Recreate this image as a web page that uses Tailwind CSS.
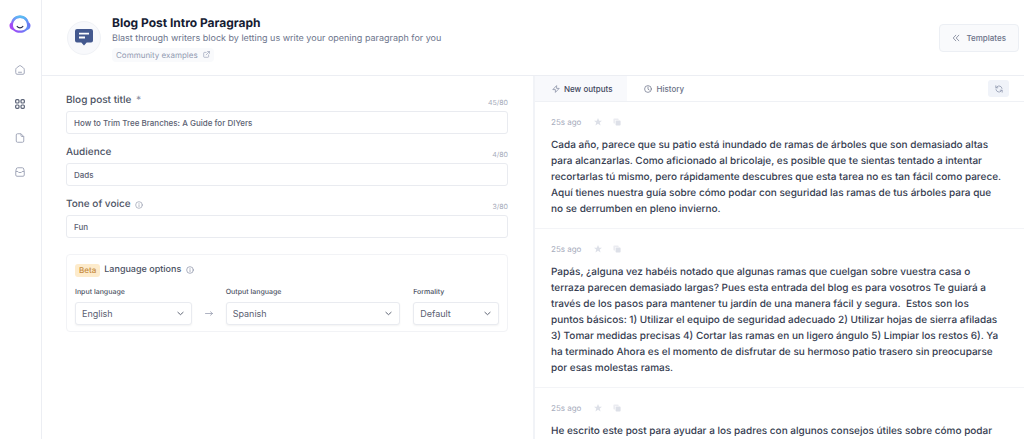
<!DOCTYPE html>
<html lang="en">
<head>
<meta charset="utf-8">
<title>Blog Post Intro Paragraph</title>
<script src="https://cdn.jsdelivr.net/npm/@tailwindcss/browser@4"></script>
</head>
<body class="bg-white font-['Inter',sans-serif] text-[#4b5263] [text-rendering:geometricPrecision]">
<svg class="hidden" aria-hidden="true">
  <symbol id="info" viewBox="0 0 24 24" fill="none" stroke="currentColor" stroke-width="2" stroke-linecap="round"><circle cx="12" cy="12" r="10"/><path d="M12 11v6M12 7.500v.1"/></symbol>
  <symbol id="chevron" viewBox="0 0 24 24" fill="none" stroke="currentColor" stroke-width="3" stroke-linecap="round" stroke-linejoin="round"><path d="M3 8l9 8 9-8"/></symbol>
  <symbol id="star" viewBox="0 0 20 20" fill="currentColor"><path d="M10 0l2.900 6.600h7.100l-5.600 4.600 2 7.300L10 14.500l-6.400 4 2-7.300L0 6.600h7.100z"/></symbol>
  <symbol id="copy" viewBox="0 0 20 20" fill="currentColor"><path opacity=".6" d="M3 1h9a2 2 0 0 1 2 2v2H8a3 3 0 0 0-3 3v6H3a2 2 0 0 1-2-2V3a2 2 0 0 1 2-2z"/><rect x="6.500" y="6.500" width="12.500" height="12.500" rx="2"/></symbol>
</svg>
<div class="flex h-screen overflow-hidden">
  <nav class="flex w-[42px] shrink-0 flex-col items-center border-r border-[#eceef3] pt-[14px] pr-px text-[#a3a8ba]">
    <a href="#" aria-label="Dashboard" class="mb-[31px]">
      <svg class="h-[20px] w-[22px]" viewBox="0 0 22 20" fill="none">
        <defs>
          <linearGradient id="g" x1="0" y1="15" x2="22" y2="7" gradientUnits="userSpaceOnUse"><stop stop-color="#b43df5"/><stop offset=".35" stop-color="#8a5cf8"/><stop offset=".75" stop-color="#5f8ff5"/><stop offset="1" stop-color="#7a5cf5"/></linearGradient>
          <linearGradient id="t" x1="0" y1="1" x2="0" y2="10" gradientUnits="userSpaceOnUse"><stop stop-color="#58c8f2"/><stop offset="1" stop-color="#58c8f2" stop-opacity="0"/></linearGradient>
        </defs>
        <path fill="url(#g)" fill-rule="evenodd" d="M11 1.500c4.800 0 7.900 3.100 8.800 7 1 .5 1.700 1.600 1.700 3.200 0 2.300-1.500 3.900-3.600 4.500-1.800 1.700-4.200 2.600-6.900 2.600s-5.100-.9-6.900-2.600C2 15.600.5 14 .5 11.700c0-1.600.7-2.700 1.700-3.200.9-3.900 4-7 8.800-7zM11 4C6.700 4 4 7.300 4 11.200c0 3.600 3 5.400 7 5.400s7-1.800 7-5.400C18 7.300 15.300 4 11 4z"/>
        <path fill="url(#t)" fill-rule="evenodd" d="M11 1.500c4.800 0 7.900 3.100 8.800 7 1 .5 1.700 1.600 1.700 3.200 0 2.300-1.500 3.900-3.600 4.500-1.800 1.700-4.200 2.600-6.900 2.600s-5.100-.9-6.900-2.600C2 15.600.5 14 .5 11.700c0-1.600.7-2.700 1.700-3.200.9-3.900 4-7 8.800-7zM11 4C6.700 4 4 7.300 4 11.200c0 3.600 3 5.400 7 5.400s7-1.800 7-5.400C18 7.300 15.300 4 11 4z"/>
        <path d="M8.200 12.500c.7 1 1.600 1.400 2.800 1.400s2.100-.4 2.800-1.400" stroke="#282b4a" stroke-width="1.300" stroke-linecap="round"/>
      </svg>
    </a>
    <div class="flex flex-col gap-[24px]">
      <a href="#" aria-label="Home"><svg class="size-[10px]" viewBox="0 0 20 20" fill="none" stroke="currentColor" stroke-width="2" stroke-linecap="round" stroke-linejoin="round"><path d="M1.500 8.500c0-1 .4-1.700 1.200-2.300L8.500 1.700c.9-.7 2.100-.7 3 0l5.800 4.500c.8.600 1.200 1.300 1.200 2.300V16a2.500 2.500 0 0 1-2.500 2.500H4A2.500 2.500 0 0 1 1.500 16zM7 14.500h6"/></svg></a>
      <a href="#" aria-label="Templates" class="text-[#5c6478]"><svg class="size-[10px]" viewBox="0 0 20 20" fill="none" stroke="currentColor" stroke-width="2.400"><rect x="1.300" y="1.300" width="6.700" height="6.700" rx="2"/><rect x="12" y="1.300" width="6.700" height="6.700" rx="2"/><rect x="1.300" y="12" width="6.700" height="6.700" rx="2"/><rect x="12" y="12" width="6.700" height="6.700" rx="2"/></svg></a>
      <a href="#" aria-label="Documents"><svg class="size-[10px]" viewBox="0 0 20 20" fill="none" stroke="currentColor" stroke-width="2" stroke-linejoin="round"><path d="M5 1.500h7L17.500 7v9a2.500 2.500 0 0 1-2.500 2.500H5A2.500 2.500 0 0 1 2.500 16V4A2.500 2.500 0 0 1 5 1.500zM12 1.500V5a2 2 0 0 0 2 2h3.500"/></svg></a>
      <a href="#" aria-label="Inbox"><svg class="size-[10px]" viewBox="0 0 20 20" fill="none" stroke="currentColor" stroke-width="2" stroke-linejoin="round"><path d="M1.500 9L2.500 4a3 3 0 0 1 3-2.500h9a3 3 0 0 1 3 2.500l1 5v7a2.500 2.500 0 0 1-2.500 2.500H4A2.500 2.500 0 0 1 1.500 16zM1.500 9h4.300l1.700 2h5l1.700-2h4.300"/></svg></a>
    </div>
  </nav>

  <div class="flex min-w-0 flex-1 flex-col">
    <header class="flex h-[76px] shrink-0 items-center border-b border-[#eceef3] pr-[5px] pl-[25px]">
      <div class="flex size-[34px] items-center justify-center rounded-full border border-[#f0f2f6] bg-[#f8f9fc]">
        <svg class="h-[17px] w-[18px]" viewBox="0 0 18 17"><path fill="#44598f" d="M2 0h14a2 2 0 0 1 2 2v9.500a2 2 0 0 1-2 2h-4.300L9 16.500l-2.700-3H2a2 2 0 0 1-2-2V2a2 2 0 0 1 2-2z"/><path d="M4 4.700h10M4 8.500h6" stroke="#fff" stroke-width="1.800"/></svg>
      </div>
      <div class="ml-[11px] flex-1">
        <h1 class="text-[12px] leading-[18px] font-bold text-[#161c33]">Blog Post Intro Paragraph</h1>
        <p class="text-[9px] leading-[14px] text-[#6d758c]">Blast through writers block by letting us write your opening paragraph for you</p>
        <a href="#" class="mt-[2px] flex h-[14px] w-fit items-center gap-[5px] rounded bg-[#f9fafc] px-[4px] text-[8px] text-[#929bb2]">Community examples
          <svg class="size-[7px]" viewBox="0 0 20 20" fill="none" stroke="currentColor" stroke-width="1.800" stroke-linecap="round" stroke-linejoin="round"><path d="M9 4H4a2 2 0 0 0-2 2v10a2 2 0 0 0 2 2h10a2 2 0 0 0 2-2v-5M13 1.500h5.500V7M18 2L9 11"/></svg>
        </a>
      </div>
      <button class="flex h-[28px] items-center gap-[6px] rounded border border-[#eceff4] bg-[#f9fafc] px-[12px] text-[8px] font-medium text-[#6b7288]">
        <svg class="size-[8px]" viewBox="0 0 20 20" fill="none" stroke="currentColor" stroke-width="1.800" stroke-linecap="round" stroke-linejoin="round"><path d="M9.500 3L3 10l6.500 7M17 3l-6.500 7 6.500 7"/></svg>
        Templates
      </button>
    </header>

    <div class="grid min-h-0 flex-1 grid-cols-2">
      <form class="flex min-w-0 flex-col gap-[12px] pt-[18px] pr-[25px] pl-[24px]">
        <div>
          <div class="flex h-[17px] justify-between"><label for="title" class="text-[10px] leading-[13px] font-medium">Blog post title <span class="ml-[2px] text-[#8b91a3]">*</span></label><span class="pt-[3px] text-[7px] leading-[12px] text-[#a6abba]">45/80</span></div>
          <input id="title" value="How to Trim Tree Branches: A Guide for DIYers" class="block h-[23px] w-full rounded-[3px] border border-[#e9ebf0] px-[7px] text-[8px] font-medium text-[#5b6172]">
        </div>
        <div>
          <div class="flex h-[17px] justify-between"><label for="audience" class="text-[10px] leading-[13px] font-medium">Audience</label><span class="pt-[3px] text-[7px] leading-[12px] text-[#a6abba]">4/80</span></div>
          <input id="audience" value="Dads" class="block h-[23px] w-full rounded-[3px] border border-[#e9ebf0] px-[7px] text-[8px] font-medium text-[#5b6172]">
        </div>
        <div>
          <div class="flex h-[17px] justify-between"><label for="tone" class="flex h-[13px] items-center gap-[4px] text-[10px] leading-[13px] font-medium">Tone of voice <svg class="size-[8px] text-[#9299ab]"><use href="#info"/></svg></label><span class="pt-[3px] text-[7px] leading-[12px] text-[#a6abba]">3/80</span></div>
          <input id="tone" value="Fun" class="block h-[23px] w-full rounded-[3px] border border-[#e9ebf0] px-[7px] text-[8px] font-medium text-[#5b6172]">
        </div>
        <fieldset class="mt-[4px] rounded border border-[#f2f3f6] px-[8px] pt-[8px] pb-[6px]">
          <div class="flex h-[14px] items-center text-[9px] font-medium">
            <span class="flex h-[13px] items-center rounded-[3px] bg-[#fdebcb] px-[4px] text-[8px] text-[#c58a3c]">Beta</span>
            <span class="ml-[4px]">Language options</span>
            <svg class="ml-[5px] size-[8px] text-[#8289a0]"><use href="#info"/></svg>
          </div>
          <div class="mt-[9px] flex items-end text-[8px]">
            <div class="min-w-0 flex-[117]">
              <label for="in" class="block h-[16px] text-[7px] leading-[12px] font-medium">Input language</label>
              <div class="grid items-center"><select id="in" class="col-start-1 row-start-1 h-[23px] w-full appearance-none rounded-[3px] border border-[#e9ebf0] bg-white px-[6px] text-[9px] text-[#5b6172] shadow-xs"><option>English</option></select><svg class="pointer-events-none col-start-1 row-start-1 mr-[8px] size-[7px] justify-self-end"><use href="#chevron"/></svg></div>
            </div>
            <svg class="mx-[13px] mb-[8px] h-[7px] w-[8px] shrink-0 text-[#9aa0b3]" viewBox="0 0 16 14" fill="none" stroke="currentColor" stroke-width="1.600" stroke-linecap="round" stroke-linejoin="round"><path d="M1 7h14M11 3.500L15 7l-4 3.500"/></svg>
            <div class="min-w-0 flex-[175]">
              <label for="out" class="block h-[16px] text-[7px] leading-[12px] font-medium">Output language</label>
              <div class="grid items-center"><select id="out" class="col-start-1 row-start-1 h-[23px] w-full appearance-none rounded-[3px] border border-[#e9ebf0] bg-white px-[6px] text-[9px] text-[#5b6172] shadow-xs"><option>Spanish</option></select><svg class="pointer-events-none col-start-1 row-start-1 mr-[8px] size-[7px] justify-self-end"><use href="#chevron"/></svg></div>
            </div>
            <div class="ml-[13px] min-w-0 flex-[86]">
              <label for="formality" class="block h-[16px] text-[7px] leading-[12px] font-medium">Formality</label>
              <div class="grid items-center"><select id="formality" class="col-start-1 row-start-1 h-[23px] w-full appearance-none rounded-[3px] border border-[#e9ebf0] bg-white px-[6px] text-[9px] text-[#5b6172] shadow-xs"><option>Default</option></select><svg class="pointer-events-none col-start-1 row-start-1 mr-[8px] size-[7px] justify-self-end"><use href="#chevron"/></svg></div>
            </div>
          </div>
        </fieldset>
      </form>

      <main class="min-w-0 overflow-hidden border-l-2 border-[#f1f3f7]">
        <div class="flex h-[26px] items-center border-b border-[#eff1f5] pr-[15px] text-[8px] font-medium">
          <button class="flex h-full items-center gap-[4px] bg-[#f8f9fc] pr-[15px] pl-[17px] text-[#3f475c]">
            <svg class="size-[8px] text-[#8a92a6]" viewBox="0 0 20 20" fill="none" stroke="currentColor" stroke-width="2" stroke-linejoin="round"><path d="M11.500 1.500L2 11.500h6.500v7l9.500-10h-6.500z"/></svg>New outputs</button>
          <button class="flex h-full items-center gap-[4px] px-[17px] text-[#6b7288]">
            <svg class="size-[8px]" viewBox="0 0 20 20" fill="none" stroke="currentColor" stroke-width="1.800" stroke-linecap="round"><circle cx="10" cy="10" r="8.500"/><path d="M10 5v5.500l3 2"/></svg>History</button>
          <button aria-label="Refresh" class="ml-auto flex h-[17px] w-[21px] items-center justify-center rounded-[3px] bg-[#f0f3f9] text-[#8e97ad]">
            <svg class="size-[8px]" viewBox="0 0 20 20" fill="none" stroke="currentColor" stroke-width="2" stroke-linecap="round" stroke-linejoin="round"><path d="M2 2v5h5M18 18v-5h-5M2.500 7L5 4.500a7.500 7.500 0 0 1 12.500 4M17.500 13L15 15.500a7.500 7.500 0 0 1-12.500-4"/></svg></button>
        </div>
        <article class="border-b border-[#f3f4f7] pt-[12px] pr-[22px] pb-[11px] pl-[16px]">
          <div class="flex h-[16px] items-center text-[8px] text-[#a8adbd]">25s ago
            <button aria-label="Favorite" class="ml-[13px] text-[#dde0e8]"><svg class="size-[8px]"><use href="#star"/></svg></button>
            <button aria-label="Copy" class="ml-[11px] text-[#dde0e8]"><svg class="size-[8px]"><use href="#copy"/></svg></button></div>
          <p class="mt-[7px] text-[10px] leading-[16px] font-medium text-[#353c50]">Cada año, parece que su patio está inundado de ramas de árboles que son demasiado altas para alcanzarlas. Como aficionado al bricolaje, es posible que te sientas tentado a intentar recortarlas tú mismo, pero rápidamente descubres que esta tarea no es tan fácil como parece. Aquí tienes nuestra guía sobre cómo podar con seguridad las ramas de tus árboles para que no se derrumben en pleno invierno.</p>
        </article>
        <article class="border-b border-[#f3f4f7] pt-[12px] pr-[22px] pb-[11px] pl-[16px]">
          <div class="flex h-[16px] items-center text-[8px] text-[#a8adbd]">25s ago
            <button aria-label="Favorite" class="ml-[13px] text-[#dde0e8]"><svg class="size-[8px]"><use href="#star"/></svg></button>
            <button aria-label="Copy" class="ml-[11px] text-[#dde0e8]"><svg class="size-[8px]"><use href="#copy"/></svg></button></div>
          <p class="mt-[7px] text-[10px] leading-[16px] font-medium text-[#353c50]">Papás, ¿alguna vez habéis notado que algunas ramas que cuelgan sobre vuestra casa o terraza parecen demasiado largas? Pues esta entrada del blog es para vosotros Te guiará a través de los pasos para mantener tu jardín de una manera fácil y segura.&nbsp; Estos son los puntos básicos: 1) Utilizar el equipo de seguridad adecuado 2) Utilizar hojas de sierra afiladas 3) Tomar medidas precisas 4) Cortar las ramas en un ligero ángulo 5) Limpiar los restos 6). Ya ha terminado Ahora es el momento de disfrutar de su hermoso patio trasero sin preocuparse por esas molestas ramas.</p>
        </article>
        <article class="pt-[12px] pr-[22px] pl-[16px]">
          <div class="flex h-[16px] items-center text-[8px] text-[#a8adbd]">25s ago
            <button aria-label="Favorite" class="ml-[13px] text-[#dde0e8]"><svg class="size-[8px]"><use href="#star"/></svg></button>
            <button aria-label="Copy" class="ml-[11px] text-[#dde0e8]"><svg class="size-[8px]"><use href="#copy"/></svg></button></div>
          <p class="mt-[7px] text-[10px] leading-[16px] font-medium text-[#353c50]">He escrito este post para ayudar a los padres con algunos consejos útiles sobre cómo podar</p>
        </article>
      </main>
    </div>
  </div>
</div>
</body>
</html>
